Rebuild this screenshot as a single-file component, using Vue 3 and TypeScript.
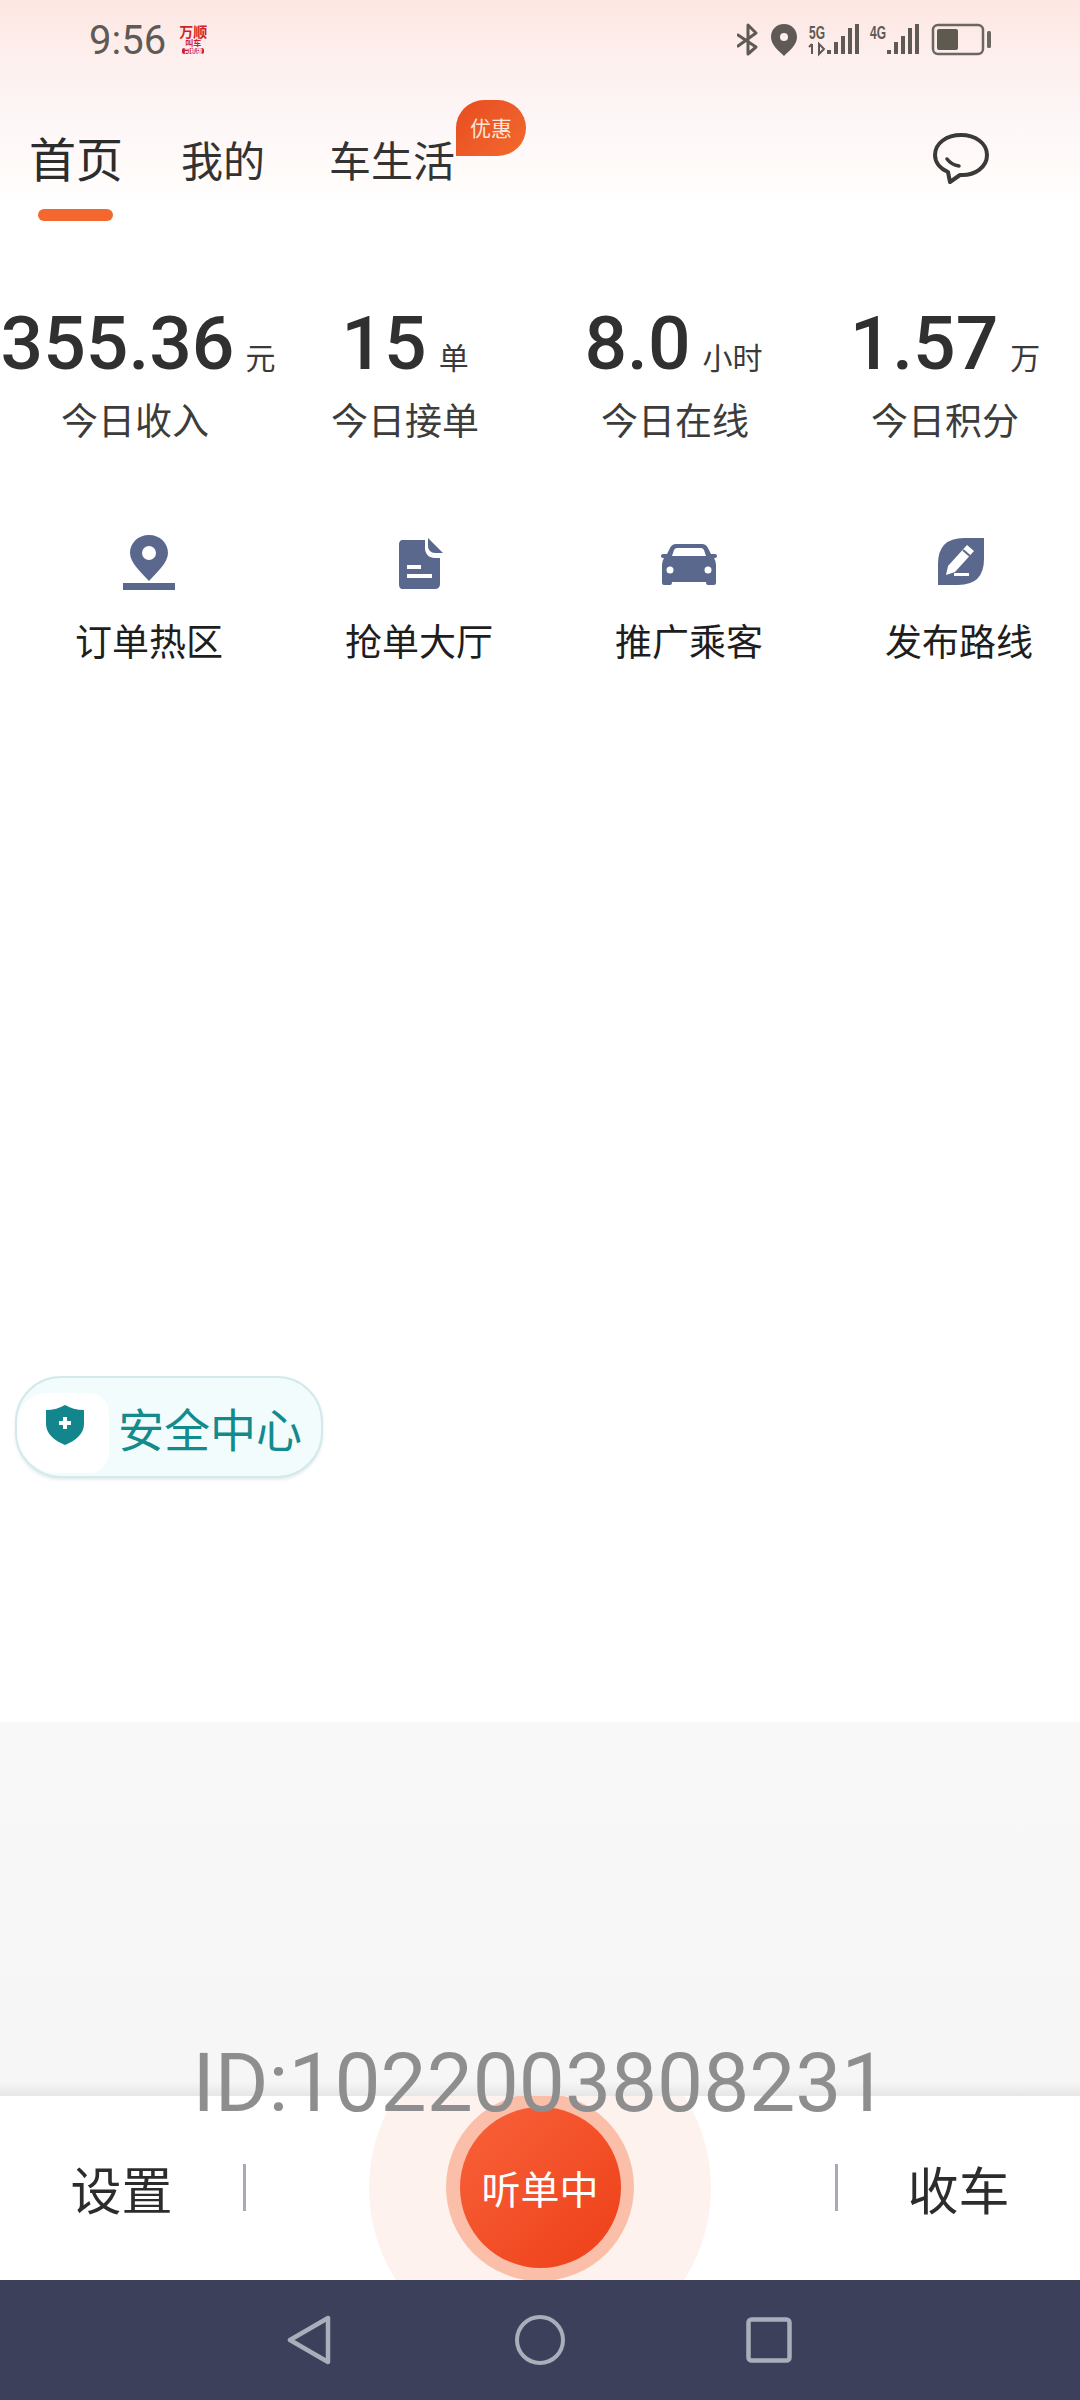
<script setup lang="ts">
const stats = [
  { value: '355.36', unit: '元', label: '今日收入' },
  { value: '15', unit: '单', label: '今日接单' },
  { value: '8.0', unit: '小时', label: '今日在线' },
  { value: '1.57', unit: '万', label: '今日积分' },
]
</script>

<template>
  <div class="page">
    <header class="header">
      <div class="status">
        <span class="time">9:56</span>
        <div class="applogo">
          <b class="l1">万顺</b>
          <b class="l2">叫车</b>
          <b class="l3">司机版</b>
        </div>
        <svg class="sysicons" width="256" height="36" viewBox="735 22 256 36">
          <path d="M736 35 L754 47 L746 54 V25 L754 33 L736 46" fill="none" stroke="#5f5a56" stroke-width="3" stroke-linejoin="round" stroke-linecap="round" />
          <path fill-rule="evenodd" fill="#5f5a56" d="M782 24 C774 24 769 30 769 37 C769 45 777 51 782 56 C787 51 795 45 795 37 C795 30 790 24 782 24 Z M782 33 A4 4 0 1 0 782 41 A4 4 0 1 0 782 33 Z" />
          <text x="807" y="39" class="net" textLength="16" lengthAdjust="spacingAndGlyphs">5G</text>
          <path d="M810 44 V54 M807 47 L810 44 M817 44 V54 L822 49 Z" fill="none" stroke="#5f5a56" stroke-width="2" />
          <g fill="#5f5a56">
            <rect x="825" y="50" width="4" height="4" />
            <rect x="832" y="42" width="4" height="12" />
            <rect x="839" y="36" width="4" height="18" />
            <rect x="846" y="28" width="4" height="26" />
            <rect x="853" y="24" width="4" height="30" />
          </g>
          <text x="868" y="39" class="net" textLength="16" lengthAdjust="spacingAndGlyphs">4G</text>
          <g fill="#5f5a56">
            <rect x="885" y="50" width="4" height="4" />
            <rect x="892" y="42" width="4" height="12" />
            <rect x="899" y="36" width="4" height="18" />
            <rect x="906" y="28" width="4" height="26" />
            <rect x="913" y="24" width="4" height="30" />
          </g>
          <rect x="931" y="25" width="50" height="29" rx="5" fill="none" stroke="#6a6662" stroke-width="2.5" />
          <rect x="935" y="29" width="21" height="21" rx="2" fill="#5f5a50" />
          <rect x="985" y="31" width="4" height="17" rx="1.5" fill="#6a6662" />
        </svg>
      </div>
      <nav class="tabs">
        <div class="tab active">
          首页
          <i class="indicator"></i>
        </div>
        <div class="tab second">我的</div>
        <div class="tab third">
          车生活
          <span class="badge">优惠</span>
        </div>
        <svg class="chat" width="56" height="52" viewBox="0 0 56 52">
          <path d="M28 2 C14 2 2 10 2 22 C2 30 8 36 15 39 L17 49 L27 42 C42 43 54 34 54 22 C54 10 42 2 28 2 Z" fill="none" stroke="#3a3a3a" stroke-width="4" stroke-linejoin="round" />
          <path d="M14 26 C17 30 20 32 26 33" fill="none" stroke="#3a3a3a" stroke-width="3.5" stroke-linecap="round" />
        </svg>
      </nav>
    </header>

    <section class="stats">
      <div v-for="s in stats" :key="s.label" class="stat">
        <div class="figure">
          <span class="value">{{ s.value }}</span>
          <span class="unit">{{ s.unit }}</span>
        </div>
        <div class="stat-label">{{ s.label }}</div>
      </div>
    </section>

    <section class="tools">
      <div class="tool">
        <svg width="56" height="56" viewBox="0 0 56 56">
          <path fill-rule="evenodd" fill="#5b688e" d="M28 0 C17 0 9 8 9 18 C9 28 21 38 28 46 C35 38 47 28 47 18 C47 8 39 0 28 0 Z M28 11 A7 7 0 1 0 28 25 A7 7 0 1 0 28 11 Z" />
          <rect x="2" y="48" width="52" height="7" fill="#5b688e" />
        </svg>
        <span>订单热区</span>
      </div>
      <div class="tool">
        <svg width="56" height="56" viewBox="0 0 56 56">
          <path fill="#5b688e" d="M12 5 H34 V13 C34 19 38 23 44 23 H49 V49 C49 52 47 54 44 54 H12 C9 54 8 52 8 49 V10 C8 7 9 5 12 5 Z" />
          <path fill="#5b688e" d="M34 4 L49 19 H41 C37 19 34 16 34 12 Z" transform="translate(3 -1)" />
          <rect x="16" y="30" width="14" height="4" fill="#fff" />
          <rect x="16" y="39" width="25" height="4" fill="#fff" />
        </svg>
        <span>抢单大厅</span>
      </div>
      <div class="tool">
        <svg width="56" height="56" viewBox="0 0 56 56">
          <path fill="#5b688e" d="M15 9 Q11 9 9 13 L6 19 H2 Q0 19 0 21 Q0 23 3 23 Q1 26 1 30 V48 Q1 50 3 50 H9 Q11 50 11 47 H45 Q45 50 47 50 H53 Q55 50 55 48 V30 Q55 26 53 23 Q56 23 56 21 Q56 19 54 19 H50 L47 13 Q45 9 41 9 Z" />
          <path fill="#fff" d="M16 13 H40 Q42 13 43 15 L45 21 H11 L13 15 Q14 13 16 13 Z" />
          <circle cx="9" cy="35" r="3.5" fill="#fff" />
          <circle cx="47" cy="35" r="3.5" fill="#fff" />
        </svg>
        <span>推广乘客</span>
      </div>
      <div class="tool">
        <svg width="56" height="56" viewBox="0 0 56 56">
          <path fill="#5b688e" d="M53 3 V24 Q53 50 27 50 H7 V29 Q7 3 33 3 Z" />
          <path fill="#fff" d="M36 10 L43 16 L24 37 L15 40 L17 31 Z" />
          <rect x="23" y="38" width="15" height="3" fill="#fff" />
          <path d="M32 15 L39 21" stroke="#5b688e" stroke-width="2" />
        </svg>
        <span>发布路线</span>
      </div>
    </section>

    <div class="content">
      <div class="safety">
        <div class="shield-box">
          <svg width="42" height="42" viewBox="0 0 42 42">
            <path fill="#12868c" d="M21 1 C26 4 33 6 40 6 V20 C40 30 31 37 21 41 C11 37 2 30 2 20 V6 C9 6 16 4 21 1 Z" />
            <path d="M21 13 V25 M15 19 H27" stroke="#fff" stroke-width="4" />
          </svg>
        </div>
        <span class="safety-text">安全中心</span>
      </div>
    </div>

    <div class="grey"></div>

    <footer class="bottom">
      <span class="side">设置</span>
      <i class="divider"></i>
      <div class="center-btn">
        <div class="glow"></div>
        <div class="ring">
          <div class="listen">听单中</div>
        </div>
      </div>
      <i class="divider"></i>
      <span class="side">收车</span>
      <div class="driver-id">ID:1022003808231</div>
    </footer>

    <div class="sysnav">
      <svg width="44" height="50" viewBox="0 0 44 50">
        <path d="M41 3 V47 L3 25 Z" fill="none" stroke="#a9aebb" stroke-width="4.5" stroke-linejoin="round" />
      </svg>
      <svg width="50" height="50" viewBox="0 0 50 50">
        <circle cx="25" cy="25" r="23" fill="none" stroke="#a9aebb" stroke-width="4" />
      </svg>
      <svg width="46" height="46" viewBox="0 0 46 46">
        <rect x="2.5" y="2.5" width="41" height="41" rx="3" fill="none" stroke="#a9aebb" stroke-width="4.5" />
      </svg>
    </div>
  </div>
</template>

<style>
html, body { margin: 0; background: #fff; }
</style>

<style scoped>
.page {
  width: 1080px;
  height: 2400px;
  display: flex;
  flex-direction: column;
  overflow: hidden;
  background: #fff;
  font-family: "Noto Sans CJK SC", "Noto Sans", sans-serif;
  color: #2c2c2c;
}
.header {
  height: 270px;
  flex: none;
  background: linear-gradient(180deg, #fde6e2 0, #fdf0ee 60px, #fdf6f7 120px, #fffbf9 170px, #fff 205px);
}
.status {
  height: 80px;
  display: flex;
  align-items: center;
  padding: 0 89px;
  box-sizing: border-box;
}
.time {
  font-family: Roboto, sans-serif;
  font-size: 40px;
  color: #5f5a56;
  line-height: 1;
  margin-top: 2px;
}
.applogo {
  margin-left: 12px;
  width: 30px;
  display: flex;
  flex-direction: column;
  align-items: center;
  color: #cf1f2e;
  margin-top: -3px;
}
.applogo b { display: block; line-height: 1; white-space: nowrap; }
.l1 { font-size: 14px; }
.l2 { font-size: 8px; margin-top: 1px; }
.l3 {
  font-size: 6px;
  margin-top: 1px;
  padding: 0 2px;
  color: #fff;
  background: #cf1f2e;
  border-radius: 2px;
}
.sysicons { margin-left: auto; margin-top: 0; flex: none; margin-right: -2px; }
.net {
  font-family: "Liberation Sans", sans-serif;
  font-weight: 700;
  font-size: 19px;
  fill: #5f5a56;
}
.tabs {
  position: relative;
  display: flex;
  align-items: flex-start;
  padding-left: 29px;
  height: 150px;
}
.tab {
  position: relative;
  font-size: 42px;
  line-height: 60px;
  margin-top: 49px;
  color: #333;
  white-space: nowrap;
}
.tab.active { font-size: 47px; color: #2c2c2c; margin-top: 47px; }
.second { margin-left: 58px; }
.third { margin-left: 64px; }
.indicator {
  position: absolute;
  left: 9px;
  top: 82px;
  width: 75px;
  height: 12px;
  border-radius: 6px;
  background: #f4682f;
}
.badge {
  position: absolute;
  left: 127px;
  top: -29px;
  width: 70px;
  height: 56px;
  border-radius: 28px 28px 28px 0;
  background: linear-gradient(135deg, #e84c22, #f26a2e);
  color: #fbe6da;
  font-size: 21px;
  line-height: 54px;
  text-align: center;
}
.chat { position: absolute; left: 933px; top: 53px; }
.stats {
  display: grid;
  grid-template-columns: repeat(4, 270px);
  margin-top: 27px;
}
.stat { display: flex; flex-direction: column; align-items: center; }
.figure {
  display: flex;
  align-items: baseline;
  gap: 12px;
  height: 92px;
  white-space: nowrap;
}
.stat:first-child .figure { margin-left: 6px; gap: 11px; }
.stat:nth-child(3) .figure { margin-left: -3px; }
.value {
  font-family: Roboto, sans-serif;
  font-weight: 500;
  font-size: 75px;
  line-height: 92px;
  color: #303030;
}
.unit { font-size: 30px; color: #3a3a3a; }
.stat-label {
  margin-top: 7px;
  font-size: 37px;
  line-height: 46px;
  color: #3c3c3c;
}
.tools {
  display: grid;
  grid-template-columns: repeat(4, 270px);
  padding-left: 14px;
  margin-top: 93px;
}
.tool { display: flex; flex-direction: column; align-items: center; }
.tool svg { display: block; }
.tool span {
  margin-top: 26px;
  font-size: 37px;
  line-height: 46px;
  color: #1e1e1e;
}
.content { flex: 1; padding: 0 15px; min-height: 0; }
.safety {
  margin-top: 713px;
  width: 308px;
  height: 102px;
  box-sizing: border-box;
  border: 2px solid #d3e9ec;
  border-radius: 46px;
  background: #f3fcfd;
  display: flex;
  align-items: center;
  box-shadow: 0 2px 3px rgba(150, 180, 185, 0.25);
}
.shield-box {
  width: 92px;
  height: 80px;
  margin-top: 12px;
  background: #fff;
  border-radius: 30px 20px 20px 40px;
  display: flex;
  align-items: center;
  justify-content: center;
  padding-bottom: 16px;
  box-sizing: border-box;
  padding-left: 4px;
}
.safety-text {
  margin-left: 9px;
  font-size: 46px;
  color: #138a8c;
  white-space: nowrap;
}
.grey {
  height: 374px;
  flex: none;
  background: linear-gradient(180deg, #f8f8f8 0, #f6f6f6 360px, #e6e6e6 374px);
}
.bottom {
  position: relative;
  height: 184px;
  flex: none;
  background: #fff;
  display: grid;
  grid-template-columns: 243px 2px 1fr 2px 243px;
  align-items: center;
}
.side {
  font-size: 51px;
  color: #2c2c2c;
  text-align: center;
  white-space: nowrap;
}
.divider {
  display: block;
  width: 3px;
  height: 47px;
  background: #a9aab8;
  margin-top: -2px;
}
.center-btn {
  position: relative;
  height: 184px;
  overflow: hidden;
  display: flex;
  align-items: center;
  justify-content: center;
}
.glow {
  position: absolute;
  left: 50%;
  top: 50%;
  width: 342px;
  height: 342px;
  margin: -171px 0 0 -171px;
  border-radius: 50%;
  background: #fdf2ee;
}
.ring {
  position: relative;
  width: 188px;
  height: 188px;
  flex: none;
  margin-top: -2px;
  border-radius: 50%;
  background: #fbbfa9;
  display: flex;
  align-items: center;
  justify-content: center;
}
.listen {
  width: 161px;
  height: 161px;
  border-radius: 50%;
  background: linear-gradient(135deg, #f8623a, #ee3f18);
  color: #fff;
  font-size: 39px;
  line-height: 161px;
  text-align: center;
  white-space: nowrap;
}
.driver-id {
  position: absolute;
  left: 0;
  right: 0;
  top: -61px;
  text-align: center;
  font-family: Roboto, sans-serif;
  font-size: 82px;
  line-height: 96px;
  color: #8e8e8e;
  pointer-events: none;
}
.sysnav {
  height: 120px;
  flex: none;
  background: #3c405b;
  display: flex;
  align-items: center;
  justify-content: center;
  box-sizing: border-box;
}
.sysnav svg { display: block; flex: none; }
.sysnav svg:nth-child(1) { margin-left: -2px; }
.sysnav svg:nth-child(2) { margin-left: 184px; }
.sysnav svg:nth-child(3) { margin-left: 181px; }
</style>
